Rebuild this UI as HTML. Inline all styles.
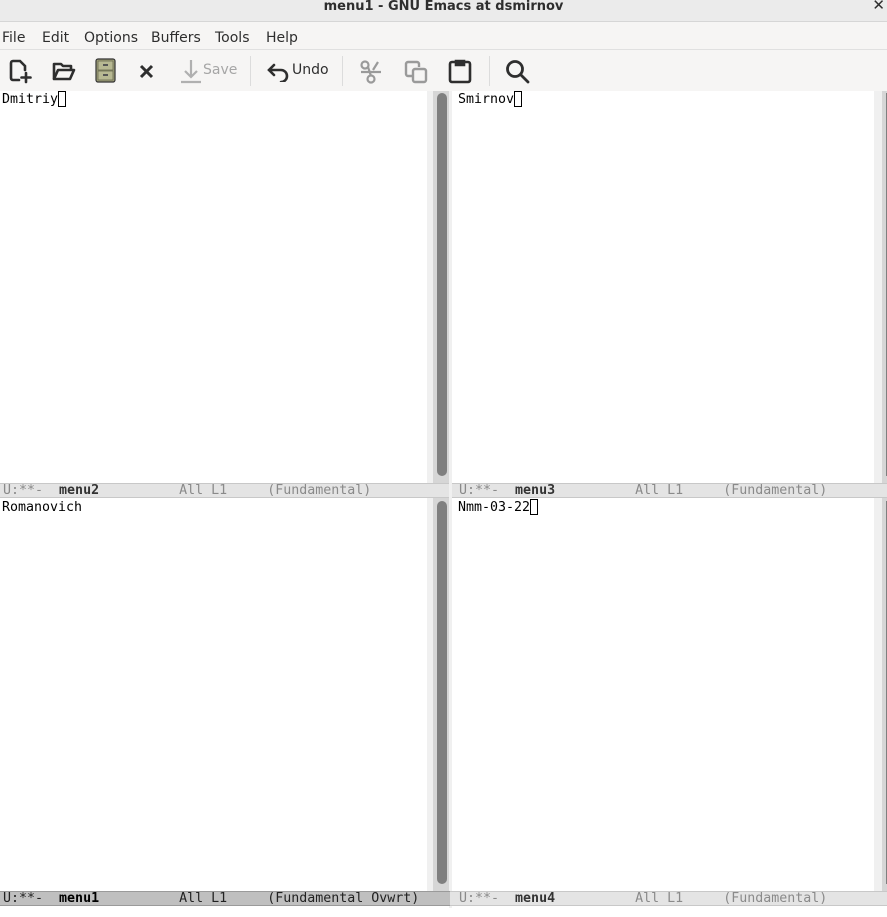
<!DOCTYPE html>
<html><head><meta charset="utf-8"><style>
*{margin:0;padding:0;box-sizing:border-box}
body{width:887px;height:917px;overflow:hidden;background:#fff;position:relative;font-family:"Liberation Sans","DejaVu Sans",sans-serif}
.abs{position:absolute}
#title{left:0;top:0;width:887px;height:22px;background:#ebebeb;text-align:center;line-height:13px;color:#2e2e2e;border-bottom:1px solid #d6d6d6;font-weight:bold;font-family:"DejaVu Sans",sans-serif;font-size:13px}
#menu{left:0;top:22px;width:887px;height:28px;background:#f6f5f4;border-bottom:1px solid #e0e0e0;font-size:14px;font-family:"DejaVu Sans",sans-serif;color:#2e2e2e}
#menu span{position:absolute;top:8px}
#tool{left:0;top:50px;width:887px;height:41px;background:#f6f5f4}
.mono{font-family:"DejaVu Sans Mono","Liberation Mono",monospace;font-size:13.3px;color:#000;white-space:pre}
.cur{display:inline-block;width:8px;height:16px;border:1px solid #000;vertical-align:-4px}
.ml{height:15px;background:#e4e4e4;border-top:1px solid #c8c8c8;border-bottom:1px solid #c8c8c8;font-family:"DejaVu Sans Mono",monospace;font-size:13.3px;color:#8a8a8a;white-space:pre;line-height:14px;padding-left:3px}
.ml b{color:#333}
.act{background:#bfbfbf;color:#222;border-color:#9a9a9a}
.act b{color:#000}
.sep{position:absolute;top:6px;width:1px;height:30px;background:#dcdcdc}
</style></head><body>
<div id="title" class="abs"><span style="position:relative;top:0">menu1 - GNU Emacs at dsmirnov</span><span style="position:absolute;right:2px;top:-1px;font-size:15px">✕</span></div>
<div id="menu" class="abs"><span style="left:2px">File</span><span style="left:42px">Edit</span><span style="left:84px">Options</span><span style="left:151px">Buffers</span><span style="left:215px">Tools</span><span style="left:266px">Help</span></div>
<div id="tool" class="abs">
<svg class="abs" style="left:8px;top:8px" width="26" height="26" viewBox="0 0 26 26" fill="none" stroke="#2e2e2e" stroke-width="2.6" stroke-linecap="round"><path d="M11 22H5a2 2 0 0 1-2-2V5a2 2 0 0 1 2-2h7l5 5v4"/><path d="M18 15v9M13.5 19.5h9"/></svg>
<svg class="abs" style="left:51px;top:9px" width="26" height="24" viewBox="0 0 26 24" fill="none" stroke="#2e2e2e" stroke-width="2.6" stroke-linejoin="round"><path d="M3 20V5h7l2 2h8v4"/><path d="M3 20l4-9h16l-4 9z"/></svg>
<svg class="abs" style="left:95px;top:8px" width="21" height="25" viewBox="0 0 21 25"><rect x="1" y="1" width="19" height="23" rx="2" fill="#a2a37c" stroke="#333" stroke-width="1.2"/><rect x="3" y="3" width="15" height="9" fill="#b7b892" stroke="#6a6b50" stroke-width=".8"/><rect x="3" y="13" width="15" height="9" fill="#b7b892" stroke="#6a6b50" stroke-width=".8"/><rect x="8" y="6" width="5" height="2" fill="#555"/><rect x="8" y="16" width="5" height="2" fill="#555"/></svg>
<svg class="abs" style="left:139px;top:14px" width="15" height="15" viewBox="0 0 15 15" stroke="#2e2e2e" stroke-width="3"><path d="M2 2l11 11M13 2L2 13"/></svg>
<svg class="abs" style="left:179px;top:8px" width="24" height="26" viewBox="0 0 24 26" fill="none" stroke="#b0b0b0" stroke-width="2.2"><path d="M12 2v17M6 13l6 6 6-6M2 24h20"/></svg>
<span class="abs" style="left:203px;top:12px;font-size:14px;color:#a6a6a6;font-family:'DejaVu Sans',sans-serif">Save</span>
<div class="sep" style="left:250px"></div>
<svg class="abs" style="left:266px;top:12px" width="26" height="20" viewBox="0 0 26 20" fill="none" stroke="#2e2e2e" stroke-width="2.6" stroke-linecap="round"><path d="M8 3L3 8l5 5M3 8h12a6 6 0 0 1 0 12"/></svg>
<span class="abs" style="left:292px;top:12px;font-size:14px;color:#2e2e2e;font-family:'DejaVu Sans',sans-serif">Undo</span>
<div class="sep" style="left:342px"></div>
<svg class="abs" style="left:358px;top:9px" width="26" height="26" viewBox="0 0 26 26" fill="none" stroke="#9a9a9a" stroke-width="2.2"><circle cx="7" cy="6" r="3.5"/><circle cx="13" cy="20" r="3.5"/><path d="M3 13h20M10 8l3 9M20 3l-5 8"/></svg>
<svg class="abs" style="left:403px;top:9px" width="26" height="26" viewBox="0 0 26 26" fill="none" stroke="#9a9a9a" stroke-width="2.4"><path d="M9 17H5a2 2 0 0 1-2-2V5a2 2 0 0 1 2-2h9a2 2 0 0 1 2 2v3"/><rect x="10" y="10" width="13" height="13" rx="2"/></svg>
<svg class="abs" style="left:448px;top:8px" width="24" height="26" viewBox="0 0 24 26" fill="none" stroke="#2e2e2e" stroke-width="2.6"><rect x="2" y="4" width="20" height="20" rx="2"/><path d="M8 3h8v4H8z" fill="#2e2e2e"/></svg>
<div class="sep" style="left:489px"></div>
<svg class="abs" style="left:505px;top:9px" width="26" height="26" viewBox="0 0 26 26" fill="none" stroke="#2e2e2e" stroke-width="2.8" stroke-linecap="round"><circle cx="10" cy="10" r="7.5"/><path d="M16 16l7 7"/></svg>
</div>
<div class="abs mono" style="left:2px;top:91px;line-height:17px">Dmitriy<span class="cur"></span></div>
<div class="abs" style="left:427px;top:91px;width:6px;height:392px;background:#f0f0f0"></div>
<div class="abs" style="left:433px;top:91px;width:16px;height:392px;background:#d6d6d6"></div>
<div class="abs" style="left:437px;top:93px;width:10px;height:383px;background:#7f7f7f;border-radius:5px"></div>
<div class="abs mono" style="left:458px;top:91px;line-height:17px">Smirnov<span class="cur"></span></div>
<div class="abs" style="left:449px;top:91px;width:3px;height:817px;background:#f0f0f0"></div>
<div class="abs" style="left:874px;top:91px;width:8px;height:392px;background:#f0f0f0"></div>
<div class="abs" style="left:882px;top:91px;width:5px;height:392px;background:#d6d6d6"></div>
<div class="abs" style="left:886px;top:93px;width:2px;height:383px;background:#7f7f7f"></div>
<div class="abs ml" style="left:0;top:483px;width:449px">U:**-  <b>menu2</b>          All L1     (Fundamental)</div>
<div class="abs ml" style="left:452px;top:483px;width:435px;padding-left:7px">U:**-  <b>menu3</b>          All L1     (Fundamental)</div>
<div class="abs mono" style="left:2px;top:499px;line-height:17px">Romanovich</div>
<div class="abs" style="left:427px;top:498px;width:6px;height:393px;background:#f0f0f0"></div>
<div class="abs" style="left:433px;top:498px;width:16px;height:393px;background:#d6d6d6"></div>
<div class="abs" style="left:437px;top:501px;width:10px;height:383px;background:#7f7f7f;border-radius:5px"></div>
<div class="abs mono" style="left:458px;top:499px;line-height:17px">Nmm-03-22<span class="cur"></span></div>
<div class="abs" style="left:874px;top:498px;width:8px;height:393px;background:#f0f0f0"></div>
<div class="abs" style="left:882px;top:498px;width:5px;height:393px;background:#d6d6d6"></div>
<div class="abs" style="left:886px;top:501px;width:2px;height:383px;background:#7f7f7f"></div>
<div class="abs ml act" style="left:0;top:891px;width:450px">U:**-  <b>menu1</b>          All L1     (Fundamental Ovwrt)</div>
<div class="abs ml" style="left:450px;top:891px;width:437px;padding-left:9px">U:**-  <b>menu4</b>          All L1     (Fundamental)</div>
</body></html>
